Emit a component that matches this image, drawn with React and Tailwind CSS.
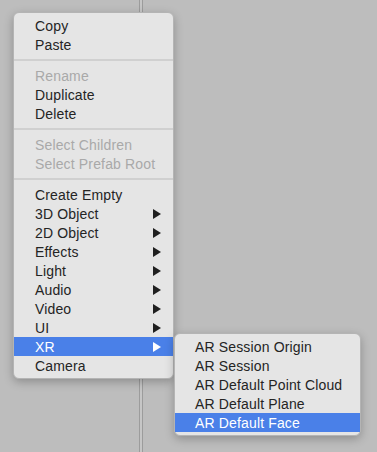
import React from 'react';

const mainItems = [
  { label: 'Copy' },
  { label: 'Paste' },
  { sep: true },
  { label: 'Rename', disabled: true },
  { label: 'Duplicate' },
  { label: 'Delete' },
  { sep: true },
  { label: 'Select Children', disabled: true },
  { label: 'Select Prefab Root', disabled: true },
  { sep: true },
  { label: 'Create Empty' },
  { label: '3D Object', sub: true },
  { label: '2D Object', sub: true },
  { label: 'Effects', sub: true },
  { label: 'Light', sub: true },
  { label: 'Audio', sub: true },
  { label: 'Video', sub: true },
  { label: 'UI', sub: true },
  { label: 'XR', sub: true, active: true },
  { label: 'Camera' },
];

const xrItems = [
  { label: 'AR Session Origin' },
  { label: 'AR Session' },
  { label: 'AR Default Point Cloud' },
  { label: 'AR Default Plane' },
  { label: 'AR Default Face', active: true },
];

const Arrow = ({ active }) => (
  <svg width="8" height="10" viewBox="0 0 8 10" className="shrink-0">
    <path d="M0 0 L8 5 L0 10 Z" fill={active ? '#ffffff' : '#1f1f1f'} />
  </svg>
);

const MenuRow = ({ item, pl }) => {
  if (item.sep) {
    return (
      <div className="h-[12px] flex items-center">
        <div className="h-[2px] w-full bg-[#d0d0d0]" />
      </div>
    );
  }
  let color = 'text-[#242424]';
  if (item.disabled) color = 'text-[#a9a9a9]';
  if (item.active) color = 'text-white bg-[#4a80e8]';
  return (
    <div className={`h-[19px] flex items-center justify-between pr-[12px] ${pl} ${color}`}>
      <span className="leading-none">{item.label}</span>
      {item.sub && <Arrow active={item.active} />}
    </div>
  );
};

const Menu = ({ items, className, pl }) => (
  <div
    className={`absolute py-[3px] rounded-[6px] bg-[#e5e5e5] border border-[#b4b4b4] shadow-[0_3px_10px_rgba(0,0,0,0.25)] ${className}`}
  >
    {items.map((item, i) => (
      <MenuRow key={i} item={item} pl={pl} />
    ))}
  </div>
);

export default function App() {
  return (
    <div
      className="relative w-[377px] h-[452px] overflow-hidden bg-[#bdbdbd] text-[14px] tracking-[0.15px]"
      style={{ fontFamily: '"Liberation Sans", Arial, sans-serif' }}
    >
      <div className="flex h-full">
        <div className="w-[139px]" />
        <div className="w-[4px] border-x border-[#9c9c9c] bg-[#c6c6c6]" />
        <div className="flex-1" />
      </div>
      <Menu items={mainItems} pl="pl-[21px]" className="left-[13px] top-[12px] w-[161px]" />
      <Menu items={xrItems} pl="pl-[20px]" className="left-[174px] top-[333px] w-[187px]" />
    </div>
  );
}
